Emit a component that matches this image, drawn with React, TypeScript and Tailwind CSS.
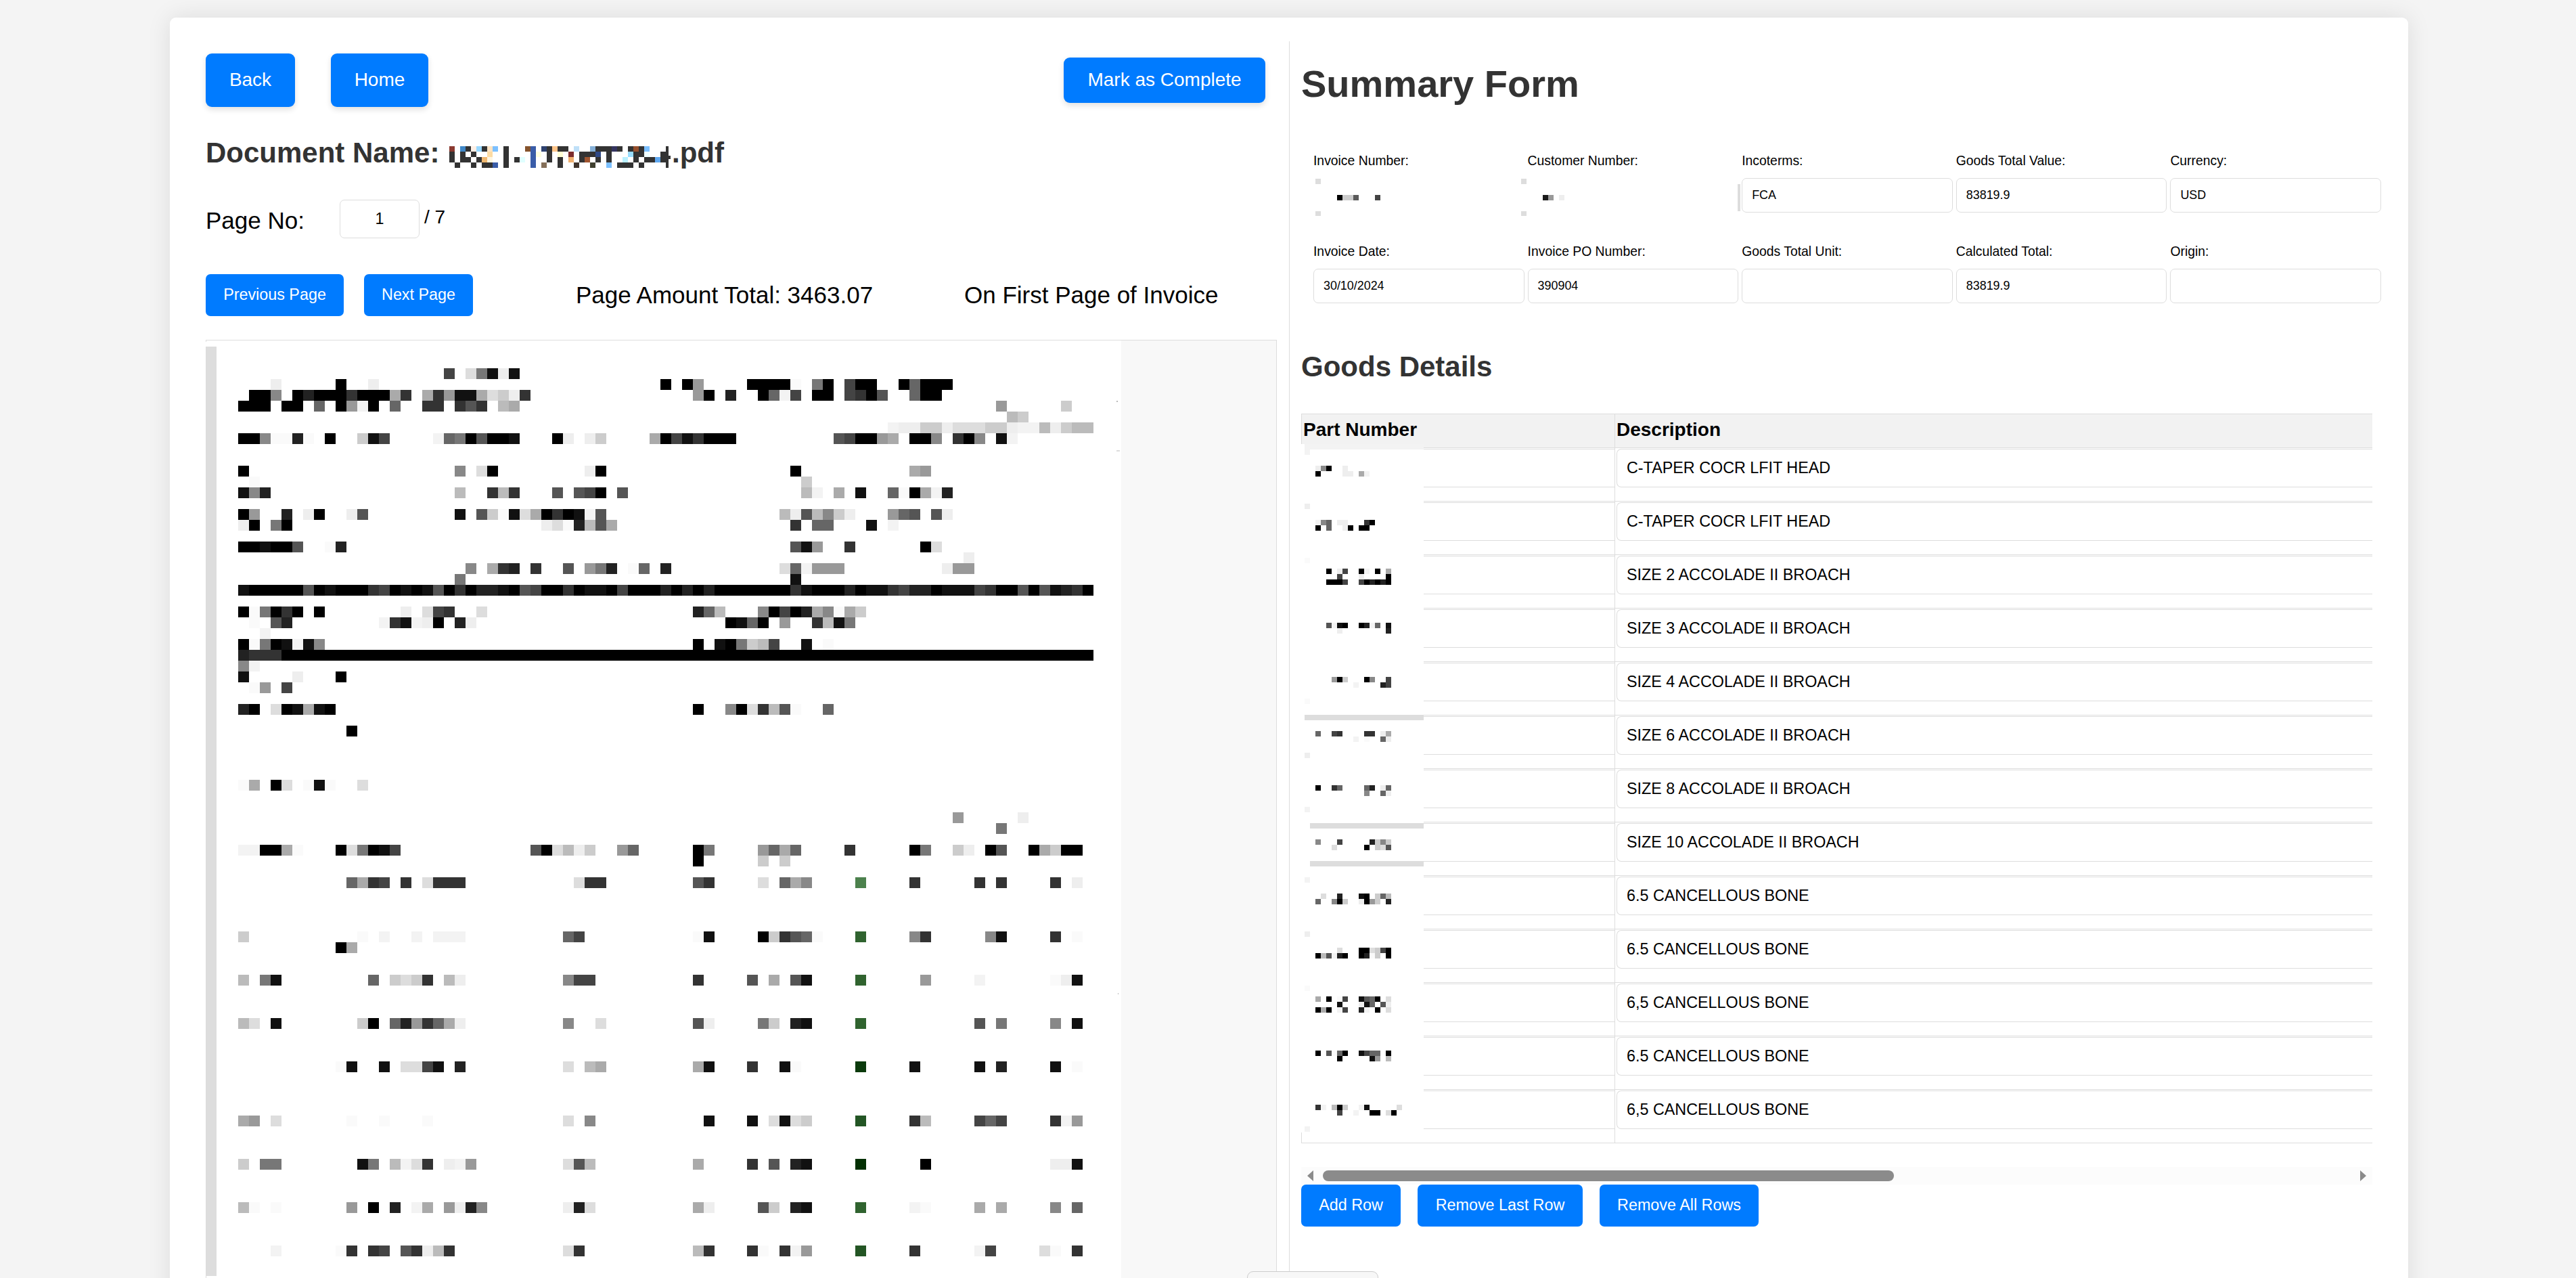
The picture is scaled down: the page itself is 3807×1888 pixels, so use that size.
import React from 'react';

const TONES: Record<string, string> = {
  w: '#f3f3f3',
  v: '#fafafa',
  K: '#4c814d',
  L: '#30632f',
  M: '#0b3a0c',
  N: '#235524',
  O: '#033003',
};

const tone = (c: string) => TONES[c] ?? '#' + c + c + c;

// Each line is "row|col:tones col:tones ..."; a dot leaves a cell empty.
const PAGE_CELLS = `
2|22:4.d71e1
3|6:e 12:0 15:e 42:0.09 50:0000v 56:70 59:400 64:06000
4|4:008.020003000a3 20:a3911adce3 45:90.2 51:06w4 56:00 59:4305 65:600
5|3:000.00.6.09w0.6 20:33.353.ba 73:9 79:c
6|74:bc
7|63:weeccedddcceww 77:becbb
8|3:008vv2v.0 14:c14 21:w6705001 32:0e.ec 41:a04120 45:3.00 58:54009a 65:008.308.1w
11|3:0 23:8.d0 35:e0 54:0 65:a9
12|4:v 55:c
13|3:182 23:b..3b3 32:5.540.5 55:bw.a.1 63:6v0aw2
15|3:09 7:2.e0 13:e5 23:1.5cv1da03 33:01w5 53:be5b8ce 63:965.5e
16|3:e0.70 31:edv2b5a 54:3.66 61:1 63:w
18|3:001005 11:v2 54:519 59:3 66:0d
19|70:e
20|24:8.a32.3 33:5.972.v6.2 53:d6w999 68:e99
21|23:7 54:1
22|3:10000050100034010150302210540030110400020 44:2020000000 54:3100020113422011143005051230
24|3:0v7030.0 18:e.d43 25:d 45:26b 51:804 54:02a8vac
25|4:v.52 16:w31we0.2e 48:0160.9 56:3b17
26|5:w
27|3:0v701w18 45:0.107cb4 55:1.v
28|3:2333 7:000000000000000000000000000000000000000000000000000000000000000000000000000
29|3:8w
30|3:1 8:e 12:0
31|4:v9.4
33|3:20.d01a10 45:0 48:80d3b5v 57:6
35|13:0
40|3:va.0d.v1v 14:d
43|69:9 75:e
44|73:7
46|3:ww00av 12:0d7014 30:50dbec 38:96 45:07 51:96a6 59:3 65:07 69:ce.05 76:0ac00
47|45:0 51:c.c
49|13:6a34.3.d333 34:d33 45:53 51:d.6a8 60:K 65:3 71:3.3 78:3.e
54|3:c 14:v.w 19:w.www 33:64 45:v1 51:0c356v 60:L 65:83 72:81 78:3.v
55|12:0a
58|3:b.71 15:6.cdc3.be 33:844 45:3 50:5.a.51 60:L 66:9 71:w 78:ve1
62|3:bd.1 14:c0.62936ae 33:8..d 45:5e 51:7c.21 60:L 71:5.7 78:8.1
66|12:v1..1.dd41.2 33:d.ba 45:a1 50:3..1v 60:M 65:1 71:1.2 78:1.v
71|3:a9.d 13:v..v 20:v 33:d.8 46:1 50:1.d1dc 60:N 65:3b 71:464 78:3w9
75|3:c.77 14:17.bwd3.ew9 33:d5b 45:a 50:3.5.21 60:O 66:0 78:ee1
79|3:bv.v 13:9.0.2.wa.9e28 33:e2d 45:ae 51:5c.21 60:L 65:wv 71:a.a 78:8.6
83|6:w 12:v3.34.53eb3 33:d3 45:b3 50:3v.3w9 60:N 65:3 71:w4 77:dv.3
`;

const PART_CELLS = `
0|0:wwwwwwwwwwwwwwwwwwwwww
1|0:w
4|2:e80..e
5|2:0 7:ee.aw
11|0:e
14|2:w86.ee 11:30
15|2:0.6..e0.00
21|0:v
23|4:0.e4 10:0w.0.a
24|6:4 10:e 15:0
25|4:0004 10:402020
33|4:5w10 10:02w6.1
34|6:e 15:2
43|5:90c 11:08 15:4
44|9:w 14:24
47|0:v
50|0:dddddddddddddddddddddd
53|2:6 5:43 11:33.ea
54|9:w.v 14:6e
57|0:e
63|2:0 5:36 11:62.e6
64|11:8 14:6e
67|0:w
70|1:ddddddddddddddddddddd
73|2:8 6:4 12:2c8c
74|5:d 11:0.cd5
77|1:ddddddddddddddddddddd
80|0:w
83|3:d 6:2 10:10.c6b
84|2:6 5:80c 10:e09c.2
90|0:e
93|6:d 10:00dc40
94|2:0b5w20 10:02vc.0
100|0:v
102|2:a.0.v4 10:1560.d
103|6:1 10:e16.5e
104|2:0a0.w4 10:2w.0.d
112|2:0.5v60 10:1466.0
113|6:0 12:19.b
122|2:3w.b0c 10:w1 17:d
123|6:4 9:w 12:00.d0
126|0:w
`;

function Cells({ data, x, y, size }: { data: string; x: number; y: number; size: number }) {
  const rects: React.ReactNode[] = [];
  data
    .trim()
    .split('\n')
    .forEach((line) => {
      const [row, runs] = line.split('|');
      runs.split(' ').forEach((run) => {
        const [col, tones] = run.split(':');
        [...tones].forEach((t, i) => {
          if (t === '.') return;
          const c = Number(col) + i;
          rects.push(
            <rect key={`${row}-${c}`} x={x + c * size} y={y + Number(row) * size} width={size} height={size} fill={tone(t)} />,
          );
        });
      });
    });
  return <g shapeRendering="crispEdges">{rects}</g>;
}

const D = '#333333';
const NAME_CELLS: [number, number, string][] = [
  [0, 0, '#8b3a30'], [2, 0, '#4088c8'], [3, 0, D], [4, 0, '#fff0e6'], [5, 0, '#99d8ff'], [6, 0, D], [7, 0, '#fde4c4'], [8, 0, '#7cc0ff'],
  [10, 0, D], [14, 0, '#85532d'], [15, 0, '#3a5da8'], [17, 0, '#2f4270'], [18, 0, D], [19, 0, '#ffc488'], [20, 0, D], [21, 0, D],
  [23, 0, '#bfe0f8'], [26, 0, '#85b0d8'], [27, 0, D], [28, 0, D], [29, 0, D], [30, 0, '#353560'], [31, 0, D], [33, 0, D],
  [34, 0, '#964f2c'], [35, 0, D], [36, 0, '#7cc0ff'],
  [0, 1, D], [2, 1, D], [4, 1, D], [7, 1, '#fddca4'], [10, 1, D], [15, 1, '#3a5da8'], [16, 1, '#ffffe0'], [18, 1, D], [20, 1, '#ffffd4'],
  [22, 1, '#7c2c2c'], [24, 1, D], [25, 1, D], [26, 1, D], [27, 1, '#2f4a88'], [29, 1, D], [33, 1, '#99ddff'], [34, 1, D], [35, 1, D], [36, 1, '#f0ffff'], [39, 1, D],
  [0, 2, D], [2, 2, D], [3, 2, D], [5, 2, D], [6, 2, '#f0b870'], [7, 2, '#fff6e0'], [10, 2, D], [12, 2, D], [13, 2, '#e0ffff'],
  [15, 2, '#3a5da8'], [18, 2, D], [20, 2, D], [22, 2, '#f0b070'], [24, 2, D], [25, 2, '#a05530'], [27, 2, D], [29, 2, D],
  [32, 2, '#b8f0ff'], [34, 2, D], [36, 2, D], [37, 2, D], [38, 2, '#60a8f0'], [39, 2, D],
  [1, 3, D], [4, 3, D], [6, 3, D], [7, 3, D], [8, 3, '#3a5da8'], [10, 3, D], [15, 3, '#3a5da8'], [17, 3, '#85705a'], [20, 3, D],
  [23, 3, '#40342c'], [26, 3, '#404030'], [29, 3, '#7cc0ff'], [31, 3, D], [32, 3, D], [33, 3, D], [35, 3, D],
];

const FIELDS: [string, string][] = [
  ['Invoice Number:', 'mask-a'],
  ['Customer Number:', 'mask-b'],
  ['Incoterms:', 'FCA'],
  ['Goods Total Value:', '83819.9'],
  ['Currency:', 'USD'],
  ['Invoice Date:', '30/10/2024'],
  ['Invoice PO Number:', '390904'],
  ['Goods Total Unit:', ''],
  ['Calculated Total:', '83819.9'],
  ['Origin:', ''],
];

const ROWS = [
  'C-TAPER COCR LFIT HEAD',
  'C-TAPER COCR LFIT HEAD',
  'SIZE 2 ACCOLADE II BROACH',
  'SIZE 3 ACCOLADE II BROACH',
  'SIZE 4 ACCOLADE II BROACH',
  'SIZE 6 ACCOLADE II BROACH',
  'SIZE 8 ACCOLADE II BROACH',
  'SIZE 10 ACCOLADE II BROACH',
  '6.5 CANCELLOUS BONE',
  '6.5 CANCELLOUS BONE',
  '6,5 CANCELLOUS BONE',
  '6.5 CANCELLOUS BONE',
  '6,5 CANCELLOUS BONE',
];

function BigButton({ className, children }: { className: string; children: string }) {
  return (
    <button
      className={`shrink-0 whitespace-nowrap rounded-[9px] bg-[#007bff] pb-[2px] text-[28px] leading-8 text-white shadow-[0_3.5px_8.75px_rgba(0,0,0,0.12)] ${className}`}
    >
      {children}
    </button>
  );
}

function SmallButton({ className, children }: { className: string; children: string }) {
  return (
    <button
      className={`h-[62px] shrink-0 whitespace-nowrap rounded-[7px] bg-[#007bff] pb-[2px] text-[23.33px] leading-7 text-white ${className}`}
    >
      {children}
    </button>
  );
}

function Field({ label, value }: { label: string; value: string }) {
  return (
    <div>
      <div className="h-[22px] whitespace-nowrap text-[19.35px] leading-[22px] text-black">{label}</div>
      {value === 'mask-a' ? (
        <svg className="mt-[15px] block h-[51px] w-full overflow-visible" shapeRendering="crispEdges">
          <rect x="3" y="1" width="8" height="8" fill="#ddd" />
          <rect x="3" y="49" width="8" height="7" fill="#ddd" />
          <rect x="35" y="25" width="8" height="8" fill="#000" />
          <rect x="43" y="25" width="16" height="8" fill="#ccc" />
          <rect x="59" y="25" width="8" height="8" fill="#5a5a5a" />
          <rect x="91" y="25" width="8" height="8" fill="#444" />
        </svg>
      ) : value === 'mask-b' ? (
        <svg className="mt-[15px] block h-[51px] w-full overflow-visible" shapeRendering="crispEdges">
          <g transform="translate(-0.6 0)">
            <rect x="-9" y="1" width="8" height="8" fill="#ddd" />
            <rect x="-9" y="49" width="8" height="7" fill="#ddd" />
            <rect x="23" y="25" width="8" height="8" fill="#1a1a1a" />
            <rect x="31" y="25" width="8" height="8" fill="#999" />
            <rect x="47" y="25" width="8" height="8" fill="#eee" />
            <rect x="311" y="9" width="4" height="40" fill="#ddd" />
          </g>
        </svg>
      ) : (
        <div className="mt-[15px] flex h-[51px] items-center rounded-[7px] border border-[#ddd] pb-[2px] pl-[14px] text-[17.9px] leading-5 text-black">
          {value}
        </div>
      )}
    </div>
  );
}

export default function App() {
  return (
    <div className="relative h-[1888px] w-[3807px] overflow-hidden bg-[#f4f4f4] pt-[26px] font-['Liberation_Sans',Arial,sans-serif] text-black">
      <main className="ml-[251px] flex h-[1900px] w-[3308px] rounded-[9px] bg-white pt-[35px] shadow-[0_0_35px_rgba(0,0,0,0.1)]">
        <section className="flex w-[1654px] shrink-0 flex-col pl-[53px] pt-[18px]">
          <div className="flex h-[79px] w-[1566px] items-center">
            <BigButton className="h-[79px] w-[132px]">Back</BigButton>
            <BigButton className="ml-[53px] h-[79px] w-[144px]">Home</BigButton>
            <BigButton className="ml-auto h-[67px] w-[298px]">Mark as Complete</BigButton>
          </div>

          <h2 className="mt-[44px] flex h-12 whitespace-nowrap text-[42px] font-bold leading-[48px] text-[#333]">
            <span className="w-[360px]">Document Name:</span>
            <svg className="mt-[14px] block h-8 w-[328px]" viewBox="0 0 328 32" shapeRendering="crispEdges">
              {NAME_CELLS.map(([c, r, fill]) => (
                <rect key={`${c}-${r}`} x={c * 8} y={r * 8} width="8" height="8" fill={fill} />
              ))}
              <rect x="320" y="0" width="4" height="32" fill="#333" />
              <rect x="324" y="14" width="3" height="5" fill="#333" />
            </svg>
            <span className="ml-px">.pdf</span>
          </h2>

          <div className="mt-[45px] flex h-[57px]">
            <span className="mt-[11px] w-[198px] text-[35px] leading-10">Page No:</span>
            <div className="flex h-[57px] w-[118px] items-center justify-center rounded-[7px] border border-[#ddd] pb-[2px] text-[23.33px] leading-7">
              1
            </div>
            <span className="ml-[7px] mt-[10px] text-[28px] leading-8">/ 7</span>
          </div>

          <div className="mt-[53px] flex h-[62px] whitespace-nowrap">
            <SmallButton className="w-[204px]">Previous Page</SmallButton>
            <SmallButton className="ml-[30px] w-[161px]">Next Page</SmallButton>
            <span className="ml-[152px] mt-[11px] w-[574px] text-[35px] leading-10">Page Amount Total: 3463.07</span>
            <span className="mt-[11px] text-[35px] leading-10">On First Page of Invoice</span>
          </div>

          <div className="mt-[35px] h-[1400px] w-[1583px] border border-[#ddd] bg-[#f8f8f8]">
            <svg className="-ml-px block h-[1398px] w-[1353px] bg-white" viewBox="304 503 1353 1398">
              <rect x="304" y="503" width="1" height="2" fill="#ddd" />
              <rect x="304" y="512" width="16" height="1373" fill="#ddd" />
              <rect x="304" y="1885" width="1" height="16" fill="#ddd" />
              <Cells data={PAGE_CELLS} x={304} y={512} size={16} />
              <rect x="1650" y="592" width="2" height="2" fill="#bbb" />
              <rect x="1650" y="665" width="5" height="2" fill="#ddd" />
              <rect x="1652" y="1467" width="1" height="2" fill="#bbb" />
            </svg>
          </div>
        </section>

        <section className="w-[1654px] border-l border-[#ddd] pl-[17px] pt-[31px]">
          <h1 className="h-16 text-[56px] font-bold leading-[64px] text-[#333]">Summary Form</h1>

          <div className="ml-[18px] mt-[70px] grid w-[1578px] grid-cols-5 gap-x-[5px] gap-y-[46px]">
            {FIELDS.map(([label, value]) => (
              <Field key={label} label={label} value={value} />
            ))}
          </div>

          <h2 className="mt-[70px] h-12 text-[42px] font-bold leading-[48px] text-[#333]">Goods Details</h2>

          <div className="relative mt-[45px] w-[1583px]">
            <div className="flex h-[50px] border-t border-[#ddd] bg-[#f2f2f2] text-[28px] font-bold leading-8">
              <div className="w-[463px] border-l border-[#ddd] pl-[2px] pt-[7px]">Part Number</div>
              <div className="flex-1 border-l border-[#ddd] pl-[2px] pt-[7px]">Description</div>
            </div>
            <div className="overflow-hidden border-b border-[#ddd]">
              {ROWS.map((text, i) => (
                <div key={i} className="flex h-[79px] border-t border-[#ddd]">
                  <div className="w-[463px] border-l border-[#ddd] pt-px">
                    <div className="h-[57px] border-y border-[#ddd]" />
                  </div>
                  <div className="flex-1 border-l border-[#ddd] pl-[2px] pt-px">
                    <div className="flex h-[57px] items-center rounded-l-[7px] border border-r-0 border-[#ddd] pb-[2px] pl-[14px] text-[23.33px] leading-7">
                      {text}
                    </div>
                  </div>
                </div>
              ))}
            </div>
            <svg className="absolute left-[-3px] top-[45px] h-[1017px] w-[184px] bg-white" viewBox="1920 656 184 1017">
              <Cells data={PART_CELLS} x={1928} y={656} size={8} />
            </svg>
          </div>

          <div className="mt-[35px] flex h-[26px] w-[1583px] items-center bg-[#fcfcfc] pl-[9px] pr-[9px]">
            <svg className="h-4 w-[9px]" viewBox="0 0 9 16">
              <path d="M9 0V16L0 8Z" fill="#8b8b8b" />
            </svg>
            <div className="ml-[14px] h-4 w-[844px] rounded-full bg-[#8b8b8b]" />
            <svg className="ml-auto h-4 w-[9px]" viewBox="0 0 9 16">
              <path d="M0 0V16L9 8Z" fill="#8b8b8b" />
            </svg>
          </div>

          <div className="flex gap-[25px]">
            <SmallButton className="w-[147px]">Add Row</SmallButton>
            <SmallButton className="w-[244px]">Remove Last Row</SmallButton>
            <SmallButton className="w-[235px]">Remove All Rows</SmallButton>
          </div>
        </section>
      </main>

      <div className="absolute left-[1843px] top-[1878px] h-10 w-[194px] rounded-[9px] border border-[#ccc] bg-[#f7f7f7]" />
    </div>
  );
}
